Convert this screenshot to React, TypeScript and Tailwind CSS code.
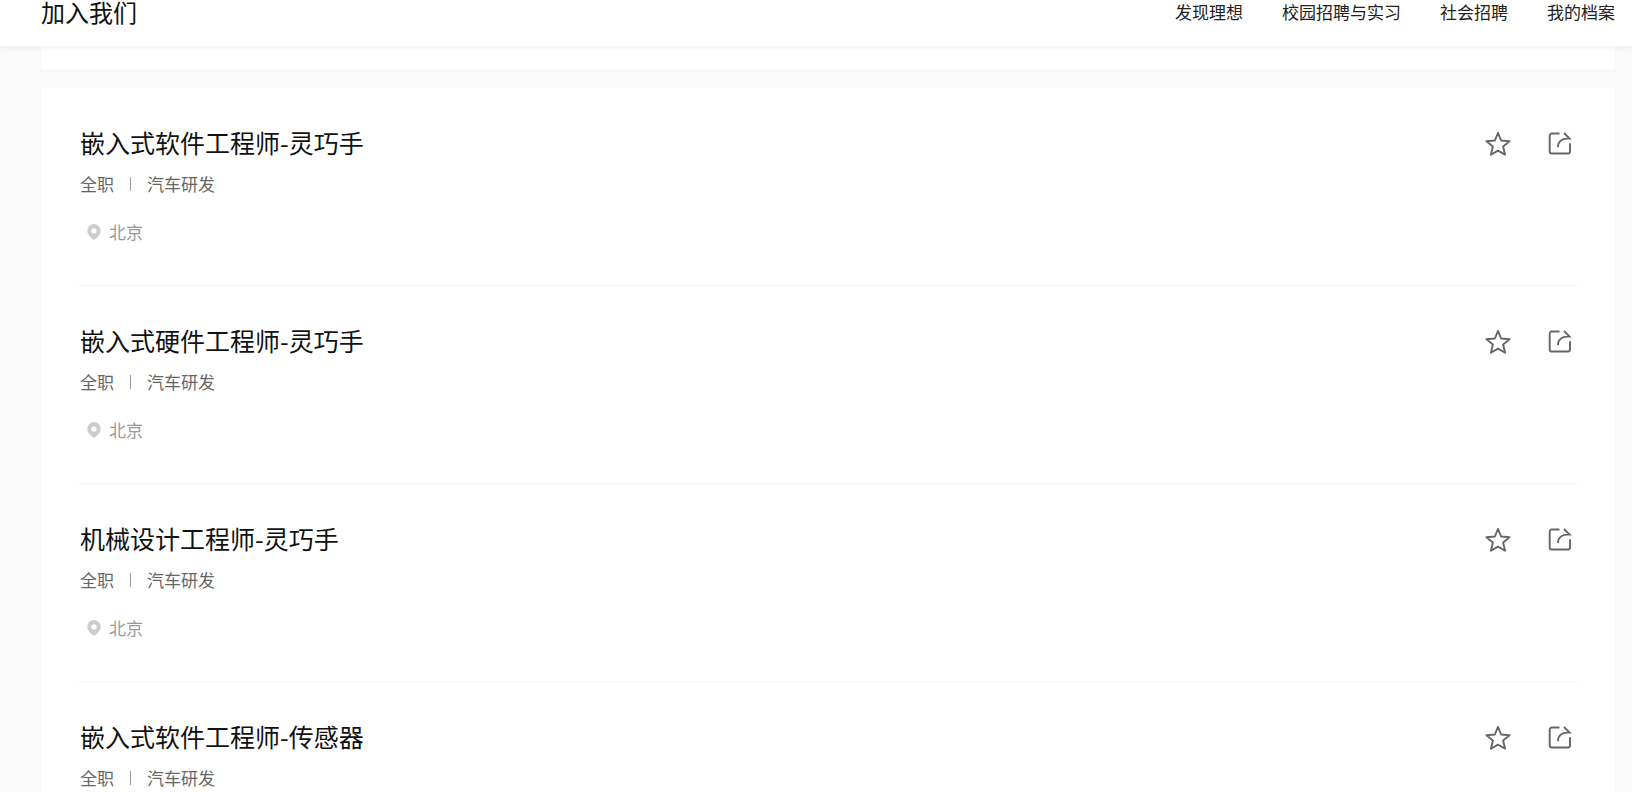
type Job = {
  id: number;
  title: string;
  type: string;
  category: string;
  city: string;
};

const NAV_ITEMS = ['发现理想', '校园招聘与实习', '社会招聘', '我的档案'];

const JOBS: Job[] = [
  { id: 1, title: '嵌入式软件工程师-灵巧手', type: '全职', category: '汽车研发', city: '北京' },
  { id: 2, title: '嵌入式硬件工程师-灵巧手', type: '全职', category: '汽车研发', city: '北京' },
  { id: 3, title: '机械设计工程师-灵巧手', type: '全职', category: '汽车研发', city: '北京' },
  { id: 4, title: '嵌入式软件工程师-传感器', type: '全职', category: '汽车研发', city: '北京' },
];

function StarIcon() {
  return (
    <svg width="26" height="26" viewBox="0 0 26 26" fill="none" stroke="currentColor" strokeWidth="1.9" strokeLinejoin="round">
      <path d="M13 1.9l3.100 7.600 8.500.7-6.500 5.300 2 8.300-7.100-4.200-7.100 4.200 2-8.300-6.500-5.300 8.500-.7z" />
    </svg>
  );
}

function ShareIcon() {
  return (
    <svg width="26" height="26" viewBox="0 0 26 26" fill="none" stroke="currentColor" strokeWidth="1.9">
      <path d="M12.500 2.500H4.700a2 2 0 0 0-2 2v16a2 2 0 0 0 2 2h16.300a2 2 0 0 0 2-2v-8.300" />
      <path d="M17 2l5.600 5.600h-2.200c-5.400 0-9.300 2.900-9.500 8.500" />
    </svg>
  );
}

function PinIcon() {
  return (
    <svg width="14" height="16" viewBox="0 0 14 16" fill="#ccc">
      <path
        fillRule="evenodd"
        d="M7 0a6.700 6.700 0 0 0-6.700 6.800c0 2.700 1.500 4.600 3.300 6.400L7 16l3.400-2.800c1.800-1.800 3.300-3.700 3.300-6.400A6.700 6.700 0 0 0 7 0zm0 4.300a2.600 2.600 0 1 1 0 5.200 2.600 2.600 0 0 1 0-5.200z"
      />
    </svg>
  );
}

function JobItem({ job }: { job: Job }) {
  return (
    <li className="border-b border-[#f2f2f2] px-px pt-9 pb-[41px]">
      <div className="flex h-10 items-start justify-between">
        <h2 className="text-[25px] leading-9 text-[#111]">
          <a href="#">{job.title}</a>
        </h2>
        <div className="flex items-center gap-9 self-center pr-[3px] text-[#666]">
          <button type="button" aria-label="收藏">
            <StarIcon />
          </button>
          <button type="button" aria-label="分享">
            <ShareIcon />
          </button>
        </div>
      </div>
      <div className="flex items-center gap-4 text-[17px] leading-10 text-[#666]">
        <span>{job.type}</span>
        <span className="h-[14px] w-px bg-[#999]" />
        <span>{job.category}</span>
      </div>
      <div className="mt-4 flex items-center gap-2 pl-[7px] text-[17px] leading-6 text-[#999]">
        <PinIcon />
        <span>{job.city}</span>
      </div>
    </li>
  );
}

export default function App() {
  return (
    <div className="h-screen overflow-hidden bg-[#fafafa] font-['Noto_Sans_CJK_SC',sans-serif]">
      <header className="relative flex items-start justify-between bg-white pr-[17px] pb-[22px] pl-[41px] shadow-[0_2px_6px_rgba(0,0,0,0.05)]">
        <h1 className="text-[24px] leading-6 text-[#111]">加入我们</h1>
        <nav className="flex gap-[39px] text-[17px] leading-6 text-[#222]">
          {NAV_ITEMS.map((item) => (
            <a key={item} href="#">
              {item}
            </a>
          ))}
        </nav>
      </header>

      <main className="pr-[17px] pl-[41px]">
        {/* bottom edge of the filter panel */}
        <div className="mb-[19px] h-[23px] bg-white" />
        <ul className="bg-white px-[38px]">
          {JOBS.map((job) => (
            <JobItem key={job.id} job={job} />
          ))}
        </ul>
      </main>
    </div>
  );
}
